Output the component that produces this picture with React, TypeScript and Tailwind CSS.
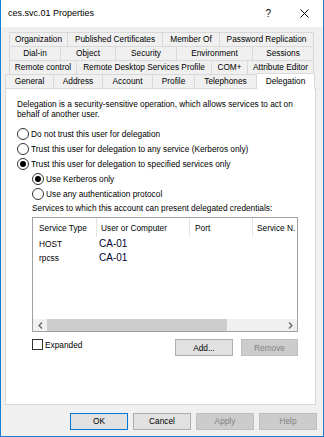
import React from 'react';

type Tab = { label: string; w: string };

const ROW1: Tab[] = [
  { label: 'Organization', w: 'w-[59px]' },
  { label: 'Published Certificates', w: 'w-[95px]' },
  { label: 'Member Of', w: 'w-[57px]' },
  { label: 'Password Replication', w: 'w-[94px]' },
];
const ROW2: Tab[] = [
  { label: 'Dial-in', w: 'w-[52px]' },
  { label: 'Object', w: 'w-[55px]' },
  { label: 'Security', w: 'w-[61px]' },
  { label: 'Environment', w: 'w-[76px]' },
  { label: 'Sessions', w: 'w-[61px]' },
];
const ROW3: Tab[] = [
  { label: 'Remote control', w: 'w-[68px]' },
  { label: 'Remote Desktop Services Profile', w: 'w-[135px]' },
  { label: 'COM+', w: 'w-[36px]' },
  { label: 'Attribute Editor', w: 'w-[66px]' },
];
const ROW4: Tab[] = [
  { label: 'General', w: 'w-[49px]' },
  { label: 'Address', w: 'w-[49px]' },
  { label: 'Account', w: 'w-[50px]' },
  { label: 'Profile', w: 'w-[42px]' },
  { label: 'Telephones', w: 'w-[62px]' },
];

function TabRow({ tabs, className = '', children }: { tabs: Tab[]; className?: string; children?: React.ReactNode }) {
  return (
    <div className={`flex h-[14px] items-start ${className}`}>
      {tabs.map((t, i) => (
        <div
          key={t.label}
          className={`${t.w} flex h-[14px] shrink-0 items-center justify-center whitespace-nowrap border-t border-r border-[#d9d9d9] bg-[#f0f0f0] ${
            i === 0 ? 'border-l' : ''
          }`}
        >
          {t.label}
        </div>
      ))}
      {children}
    </div>
  );
}

function Radio({ label, checked = false }: { label: string; checked?: boolean }) {
  return (
    <div className="flex h-[15px] items-center">
      <span className="flex h-[12px] w-[12px] shrink-0 items-center justify-center rounded-full border border-[#333333] bg-white">
        {checked && <span className="h-[6px] w-[6px] rounded-full bg-black" />}
      </span>
      <span className="ml-[2px]">{label}</span>
    </div>
  );
}

function Btn({ label, w, primary = false, disabled = false }: { label: string; w: string; primary?: boolean; disabled?: boolean }) {
  const tone = disabled
    ? 'border-[#bfbfbf] bg-[#cccccc] text-[#838383]'
    : primary
      ? 'border-[#0078d7] bg-[#e1e1e1] text-black'
      : 'border-[#adadad] bg-[#e1e1e1] text-black';
  return (
    <div className={`${w} flex h-[17px] shrink-0 items-center justify-center border ${tone}`}>{label}</div>
  );
}

function Chevron({ dir }: { dir: 'l' | 'r' }) {
  return (
    <svg width="5" height="7" viewBox="0 0 5 7" className="block">
      <path
        d={dir === 'l' ? 'M4 0.5 L1 3.5 L4 6.5' : 'M1 0.5 L4 3.5 L1 6.5'}
        fill="none"
        stroke="#606060"
        strokeWidth="1.2"
      />
    </svg>
  );
}

export default function App() {
  return (
    <div className="flex h-[437px] w-[324px] flex-col overflow-hidden border-x border-b border-[#1a7fd4] bg-[#f0f0f0] font-['Liberation_Sans',Arial,sans-serif] text-[8.3px] leading-none text-black">
      {/* title bar */}
      <div className="flex h-[27px] shrink-0 items-center bg-white pl-[7px] text-[9px]">
        <span>ces.svc.01 Properties</span>
        <span className="ml-auto text-[10px]">?</span>
        <svg width="9" height="9" viewBox="0 0 9 9" className="ml-[29px] mr-[14px]">
          <path d="M0.5 0.5 L8.5 8.5 M8.5 0.5 L0.5 8.5" stroke="#000" strokeWidth="1" />
        </svg>
      </div>

      {/* tabs */}
      <div className="mt-[5px] flex flex-col">
        <TabRow tabs={ROW1} className="ml-[8px]" />
        <TabRow tabs={ROW2} className="ml-[8px]" />
        <TabRow tabs={ROW3} className="ml-[8px]" />
        <TabRow tabs={ROW4} className="ml-[4px]">
          <div className="relative z-10 -mt-px flex h-[16px] w-[58px] shrink-0 items-start justify-center border-t border-r border-[#d9d9d9] bg-white pt-[3px]">
            Delegation
          </div>
        </TabRow>
      </div>

      {/* panel */}
      <div className="ml-[4px] h-[317px] w-[311px] shrink-0 border border-[#d9d9d9] bg-white pl-[11px] pt-[10px] leading-[10px]">
        <p>
          Delegation is a security-sensitive operation, which allows services to act on
          <br />
          behalf of another user.
        </p>
        <div className="mt-[7px]">
          <Radio label="Do not trust this user for delegation" />
          <Radio label="Trust this user for delegation to any service (Kerberos only)" />
          <Radio label="Trust this user for delegation to specified services only" checked />
        </div>
        <div className="pl-[15px]">
          <Radio label="Use Kerberos only" checked />
          <Radio label="Use any authentication protocol" />
          <p className="mt-[2px]">Services to which this account can present delegated credentials:</p>

          {/* list view */}
          <div className="mt-[4px] flex h-[115px] w-[266px] flex-col border border-[#a0a0a0] bg-white">
            <div className="flex h-[19px] shrink-0">
              <div className="flex w-[64px] items-center border-r border-[#e5e5e5] pl-[6px]">Service Type</div>
              <div className="flex w-[93px] items-center border-r border-[#e5e5e5] pl-[4px]">User or Computer</div>
              <div className="flex w-[63px] items-center border-r border-[#e5e5e5] pl-[5px]">Port</div>
              <div className="flex min-w-0 flex-1 items-center whitespace-nowrap pl-[4px]">Service N.</div>
            </div>
            <div className="flex h-[14px] items-center">
              <span className="w-[66px] pl-[6px]">HOST</span>
              <span className="text-[10px] text-[#000033]">CA-01</span>
            </div>
            <div className="flex h-[14px] items-center">
              <span className="w-[66px] pl-[6px]">rpcss</span>
              <span className="text-[10px] text-[#000033]">CA-01</span>
            </div>
            <div className="flex-1" />
            <div className="flex h-[12px] shrink-0 items-center bg-[#f0f0f0]">
              <div className="flex w-[14px] items-center justify-center">
                <Chevron dir="l" />
              </div>
              <div className="h-full w-[180px] bg-[#cdcdcd]" />
              <div className="flex-1" />
              <div className="flex w-[14px] items-center justify-center">
                <Chevron dir="r" />
              </div>
            </div>
          </div>

          <div className="mt-[7px] flex w-[266px] items-start justify-between">
            <div className="flex items-center">
              <span className="h-[11px] w-[11px] border border-[#333333] bg-white" />
              <span className="ml-[2px]">Expanded</span>
            </div>
            <div className="flex gap-[8px]">
              <Btn label="Add..." w="w-[58px]" />
              <Btn label="Remove" w="w-[57px]" disabled />
            </div>
          </div>
        </div>
      </div>

      {/* dialog buttons */}
      <div className="mt-[8px] flex justify-end gap-[5px] pr-[6px]">
        <Btn label="OK" w="w-[58px]" primary />
        <Btn label="Cancel" w="w-[58px]" />
        <Btn label="Apply" w="w-[58px]" disabled />
        <Btn label="Help" w="w-[58px]" disabled />
      </div>
    </div>
  );
}
